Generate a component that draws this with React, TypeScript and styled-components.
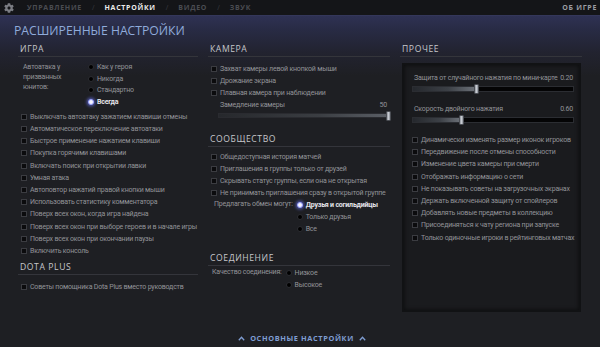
import React from "react";
import styled, { createGlobalStyle } from "styled-components";
import { FaCog } from "react-icons/fa";

const GlobalStyle = createGlobalStyle`
  html, body { margin: 0; padding: 0; }
  body {
    background: #1e1f23;
    font-family: "Open Sans", "Noto Sans", sans-serif;
    width: 600px;
    height: 347px;
    overflow: hidden;
  }
  * { box-sizing: border-box; }
`;

const TEXT_FONT = `font-family: Roboto, "Open Sans", sans-serif; font-size: 7px; letter-spacing: -0.2px;`;

const Shell = styled.div`
  width: 600px;
  height: 347px;
  display: flex;
  flex-direction: column;
`;

const TopBar = styled.div`
  height: 15px;
  flex: none;
  background: #141518;
  display: flex;
  align-items: center;
  padding: 0 3px 0 4px;
`;

const Gear = styled(FaCog)`
  width: 10px;
  height: 10px;
  color: #7b7d83;
  margin-right: 13px;
`;

const Tab = styled.span<{ $active?: boolean }>`
  font-size: 7px;
  font-weight: 700;
  letter-spacing: 0.7px;
  line-height: 15px;
  color: ${(p) => (p.$active ? "#ececec" : "#4a4c52")};
`;

const Slash = styled.span`
  font-size: 7px;
  color: #3a3c42;
  margin: 0 10px;
`;

const AboutTab = styled(Tab)`
  margin-left: auto;
  color: #9c9ea3;
`;

const Main = styled.div`
  flex: 1;
  display: flex;
  flex-direction: column;
  border-top: 1px solid #34375a;
  background: linear-gradient(180deg, #2e3153 0px, #282b44 14px, #222330 36px, #1e1f23 60px);
`;

const Title = styled.h1`
  margin: 7px 0 0 14px;
  font-size: 12.2px;
  line-height: 16px;
  height: 16px;
  font-weight: 400;
  letter-spacing: 0;
  color: #8fabdb;
`;

const Columns = styled.div`
  margin-top: 3px;
  padding-left: 18px;
  display: grid;
  grid-template-columns: 180px 182px 182px;
  column-gap: 10px;
`;

const Column = styled.div`
  display: flex;
  flex-direction: column;
`;

const Heading = styled.div<{ $mt?: number }>`
  margin-top: ${(p) => p.$mt ?? 0}px;
  line-height: 14px;
  font-size: 8.6px;
  letter-spacing: 0.6px;
  color: #c6c7cb;
  padding-left: 2px;
  border-bottom: 1px solid #34353b;
  box-sizing: content-box;
  height: 14px;
`;

const List = styled.div<{ $mt?: number }>`
  margin-top: ${(p) => p.$mt ?? 0}px;
  display: flex;
  flex-direction: column;
`;

const CheckRow = styled.div<{ $indent?: number }>`
  height: 12.2px;
  display: flex;
  align-items: center;
  gap: 3px;
  padding-left: ${(p) => p.$indent ?? 3}px;
  ${TEXT_FONT}
  color: #929398;
  white-space: nowrap;
`;

const Box = styled.span`
  width: 6px;
  height: 6px;
  flex: none;
  background: #0b0b0d;
  border: 1px solid #3b3c41;
`;

const RadioRow = styled.div<{ $on?: boolean }>`
  height: 11.7px;
  display: flex;
  align-items: center;
  gap: 3px;
  ${TEXT_FONT}
  white-space: nowrap;
  color: ${(p) => (p.$on ? "#e4e4ea" : "#929398")};
  font-weight: ${(p) => (p.$on ? 700 : 400)};
`;

const Dot = styled.span<{ $on?: boolean }>`
  width: 6px;
  height: 6px;
  flex: none;
  border-radius: 50%;
  background: ${(p) => (p.$on ? "#f4f4ff" : "#000")};
  border: 1px solid ${(p) => (p.$on ? "#9aa2ff" : "#2c2d32")};
  box-shadow: ${(p) => (p.$on ? "0 0 3px 1.5px rgba(110,120,255,0.55)" : "none")};
`;

const OptionBlock = styled.div<{ $mt?: number; $pl?: number }>`
  margin-top: ${(p) => p.$mt ?? 0}px;
  padding-left: ${(p) => p.$pl ?? 0}px;
  display: flex;
  align-items: flex-start;
  gap: 4px;
`;

const OptionLabel = styled.div`
  ${TEXT_FONT}
  line-height: 11.7px;
  color: #929398;
  white-space: nowrap;
`;

const AutoLabel = styled.div`
  width: 61px;
  margin-top: 1px;
  ${TEXT_FONT}
  line-height: 10px;
  color: #929398;
`;

const RadioCol = styled.div`
  display: flex;
  flex-direction: column;
`;

const SliderBlock = styled.div<{ $mt?: number; $pl?: number; $pr?: number }>`
  margin-top: ${(p) => p.$mt ?? 0}px;
  padding-left: ${(p) => p.$pl ?? 0}px;
  padding-right: ${(p) => p.$pr ?? 0}px;
  display: flex;
  flex-direction: column;
`;

const SliderHead = styled.div`
  height: 10px;
  line-height: 10px;
  display: flex;
  justify-content: space-between;
  padding: 0 1px 0 2px;
  ${TEXT_FONT}
  color: #929398;
  white-space: nowrap;
`;

const TrackWrap = styled.div<{ $mt?: number }>`
  margin-top: ${(p) => p.$mt ?? 1}px;
  height: 10px;
  display: flex;
  align-items: center;
  position: relative;
`;

const Track = styled.div<{ $variant: "soft" | "dark" }>`
  width: 100%;
  height: ${(p) => (p.$variant === "soft" ? 5 : 6)}px;
  background: ${(p) => (p.$variant === "soft" ? "#16171a" : "#040405")};
  border: 1px solid ${(p) => (p.$variant === "soft" ? "#2a2b30" : "#2b2d32")};
  position: relative;
  overflow: hidden;
`;

const Fill = styled.div<{ $variant: "soft" | "dark" }>`
  height: 100%;
  background: ${(p) =>
    p.$variant === "soft"
      ? "linear-gradient(90deg, #26282c 0%, #3b3e43 60%, #5a5e65 100%)"
      : "linear-gradient(90deg, #25282d 0%, #3c4046 55%, #6f747b 100%)"};
`;

const Thumb = styled.div`
  position: absolute;
  top: 0;
  width: 5px;
  height: 10px;
  margin-left: -2.5px;
  border-radius: 1px;
  background: linear-gradient(90deg, #8f939b 0%, #c6cad1 50%, #8a8e96 100%);
  border: 1px solid #4a4d53;
`;

const Panel = styled.div`
  margin-top: 6px;
  height: 249px;
  margin-left: 2px;
  width: 179px;
  background: #1a1b1e;
  border: 2px solid #111214;
  box-shadow: inset 0 0 4px rgba(0, 0, 0, 0.6);
  padding: 8px 5px 0 8px;
  display: flex;
  flex-direction: column;
`;

const Footer = styled.div`
  margin-top: auto;
  height: 14px;
  margin-bottom: 2px;
  display: flex;
  align-items: center;
  justify-content: center;
  gap: 5px;
  padding-left: 4px;
  color: #7f9dd2;
  font-size: 7.4px;
  font-weight: 700;
  letter-spacing: 0.6px;
`;

const Chevron = () => (
  <svg width="7" height="5" viewBox="0 0 7 5">
    <path d="M0.8 4.2 L3.5 1.3 L6.2 4.2" fill="none" stroke="#7f9dd2" strokeWidth="1.3" />
  </svg>
);

const Check = ({ label, indent }: { label: string; indent?: number }) => (
  <CheckRow $indent={indent}>
    <Box />
    <span>{label}</span>
  </CheckRow>
);

const Radio = ({ label, on }: { label: string; on?: boolean }) => (
  <RadioRow $on={on}>
    <Dot $on={on} />
    <span>{label}</span>
  </RadioRow>
);

const Slider = ({
  label,
  value,
  pos,
  variant,
}: {
  label: string;
  value: string;
  pos: number;
  variant: "soft" | "dark";
}) => (
  <>
    <SliderHead>
      <span>{label}</span>
      <span>{value}</span>
    </SliderHead>
    <TrackWrap>
      <Track $variant={variant}>
        <Fill $variant={variant} style={{ width: `${pos}%` }} />
      </Track>
      <Thumb style={{ left: `${pos}%` }} />
    </TrackWrap>
  </>
);

const gameChecks = [
  "Выключать автоатаку зажатием клавиши отмены",
  "Автоматическое переключение автоатаки",
  "Быстрое применение нажатием клавиши",
  "Покупка горячими клавишами",
  "Включать поиск при открытии лавки",
  "Умная атака",
  "Автоповтор нажатий правой кнопки мыши",
  "Использовать статистику комментатора",
  "Поверх всех окон, когда игра найдена",
  "Поверх всех окон при выборе героев и в начале игры",
  "Поверх всех окон при окончании паузы",
  "Включить консоль",
];

const cameraChecks = [
  "Захват камеры левой кнопкой мыши",
  "Дрожание экрана",
  "Плавная камера при наблюдении",
];

const communityChecks = [
  "Общедоступная история матчей",
  "Приглашения в группы только от друзей",
  "Скрывать статус группы, если она не открытая",
  "Не принимать приглашения сразу в открытой группе",
];

const otherChecks = [
  "Динамически изменять размер иконок игроков",
  "Передвижение после отмены способности",
  "Изменение цвета камеры при смерти",
  "Отображать информацию о сети",
  "Не показывать советы на загрузочных экранах",
  "Держать включенной защиту от спойлеров",
  "Добавлять новые предметы в коллекцию",
  "Присоединяться к чату региона при запуске",
  "Только одиночные игроки в рейтинговых матчах",
];

export default function App() {
  return (
    <>
      <GlobalStyle />
      <Shell>
        <TopBar>
          <Gear />
          <Tab>УПРАВЛЕНИЕ</Tab>
          <Slash>/</Slash>
          <Tab $active>НАСТРОЙКИ</Tab>
          <Slash>/</Slash>
          <Tab>ВИДЕО</Tab>
          <Slash>/</Slash>
          <Tab>ЗВУК</Tab>
          <AboutTab>ОБ ИГРЕ</AboutTab>
        </TopBar>
        <Main>
          <Title>РАСШИРЕННЫЕ НАСТРОЙКИ</Title>
          <Columns>
            <Column>
              <Heading>ИГРА</Heading>
              <OptionBlock $mt={4} $pl={5}>
                <AutoLabel>
                  Автоатака у
                  <br />
                  призванных
                  <br />
                  юнитов:
                </AutoLabel>
                <RadioCol>
                  <Radio label="Как у героя" />
                  <Radio label="Никогда" />
                  <Radio label="Стандартно" />
                  <Radio label="Всегда" on />
                </RadioCol>
              </OptionBlock>
              <List $mt={3}>
                {gameChecks.map((c) => (
                  <Check key={c} label={c} />
                ))}
              </List>
              <Heading $mt={3}>DOTA PLUS</Heading>
              <List $mt={6}>
                <Check label="Советы помощника Dota Plus вместо руководств" />
              </List>
            </Column>

            <Column>
              <Heading>КАМЕРА</Heading>
              <List $mt={6}>
                {cameraChecks.map((c) => (
                  <Check key={c} label={c} />
                ))}
              </List>
              <SliderBlock $pl={10} $pr={2}>
                <Slider label="Замедление камеры" value="50" pos={100} variant="soft" />
              </SliderBlock>
              <Heading $mt={11}>СООБЩЕСТВО</Heading>
              <List $mt={4}>
                {communityChecks.map((c) => (
                  <Check key={c} label={c} />
                ))}
              </List>
              <OptionBlock $pl={6}>
                <OptionLabel>Предлагать обмен могут:</OptionLabel>
                <RadioCol>
                  <Radio label="Друзья и согильдийцы" on />
                  <Radio label="Только друзья" />
                  <Radio label="Все" />
                </RadioCol>
              </OptionBlock>
              <Heading $mt={17}>СОЕДИНЕНИЕ</Heading>
              <OptionBlock $mt={1} $pl={4}>
                <OptionLabel>Качество соединения:</OptionLabel>
                <RadioCol>
                  <Radio label="Низкое" />
                  <Radio label="Высокое" />
                </RadioCol>
              </OptionBlock>
            </Column>

            <Column>
              <Heading>ПРОЧЕЕ</Heading>
              <Panel>
                <SliderBlock>
                  <Slider
                    label="Защита от случайного нажатия по мини-карте"
                    value="0.20"
                    pos={40}
                    variant="dark"
                  />
                </SliderBlock>
                <SliderBlock $mt={10}>
                  <Slider label="Скорость двойного нажатия" value="0.60" pos={30.7} variant="dark" />
                </SliderBlock>
                <List $mt={9}>
                  {otherChecks.map((c) => (
                    <Check key={c} label={c} indent={0} />
                  ))}
                </List>
              </Panel>
            </Column>
          </Columns>
          <Footer>
            <Chevron />
            <span>ОСНОВНЫЕ НАСТРОЙКИ</span>
            <Chevron />
          </Footer>
        </Main>
      </Shell>
    </>
  );
}
